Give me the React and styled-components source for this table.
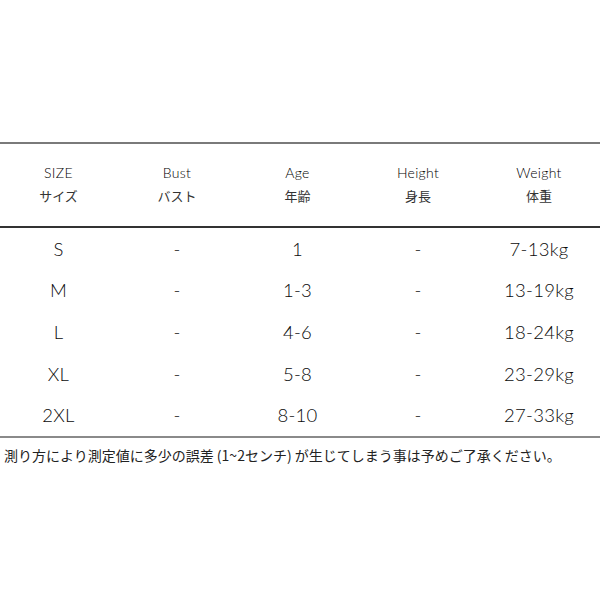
import React from "react";
import styled, { createGlobalStyle } from "styled-components";

const Global = createGlobalStyle`
  html, body { margin: 0; padding: 0; background: #fff; }
  body { font-family: "Lato", "Noto Sans CJK JP", sans-serif; color: #222; }
`;

const Page = styled.div`
  width: 600px;
  height: 600px;
  padding-top: 142px;
  box-sizing: border-box;
`;

const Table = styled.div`
  border-top: 2px solid #7a7a7a;
  border-bottom: 2px solid #8a8a8a;
`;

const Row = styled.div`
  display: grid;
  grid-template-columns: 117px 120px 121px 120px 122px;
  align-items: center;
  height: ${(p) => p.$h}px;
  border-bottom: ${(p) => (p.$head ? "2px solid #333" : "none")};
  box-sizing: border-box;
`;

const HeadCell = styled.div`
  text-align: center;
  font-size: 14px;
  line-height: 23px;
  color: #000;
  font-weight: 300;
  letter-spacing: 0.3px;
  font-family: "Lato", "Noto Sans CJK JP", sans-serif;
  padding-bottom: 2px;
`;

const Jp = styled.span`
  font-size: 13px;
  font-weight: 400;
  letter-spacing: 0;
  color: #333;
`;

const Cell = styled.div`
  text-align: center;
  font-size: 18.5px;
  font-weight: 300;
  letter-spacing: 0.3px;
  color: #0a0a0a;
  font-family: "Lato", sans-serif;
`;

const Note = styled.p`
  margin: 7px 0 0 4px;
  font-size: 14px;
  color: #222;
  font-family: "Noto Sans CJK JP", sans-serif;
  white-space: nowrap;
`;

const head = [
  ["SIZE", "サイズ"],
  ["Bust", "バスト"],
  ["Age", "年齢"],
  ["Height", "身長"],
  ["Weight", "体重"],
];

const rows = [
  ["S", "-", "1", "-", "7-13kg"],
  ["M", "-", "1-3", "-", "13-19kg"],
  ["L", "-", "4-6", "-", "18-24kg"],
  ["XL", "-", "5-8", "-", "23-29kg"],
  ["2XL", "-", "8-10", "-", "27-33kg"],
];

export default function App() {
  return (
    <Page>
      <Global />
      <Table>
        <Row $head $h={84}>
          {head.map(([en, jp]) => (
            <HeadCell key={en}>
              {en}
              <br />
              <Jp>{jp}</Jp>
            </HeadCell>
          ))}
        </Row>
        {rows.map((r, i) => (
          <Row key={i} $h={41.6}>
            {r.map((c, j) => (
              <Cell key={j}>{c}</Cell>
            ))}
          </Row>
        ))}
      </Table>
      <Note>測り方により測定値に多少の誤差 (1~2センチ) が生じてしまう事は予めご了承ください。</Note>
    </Page>
  );
}
